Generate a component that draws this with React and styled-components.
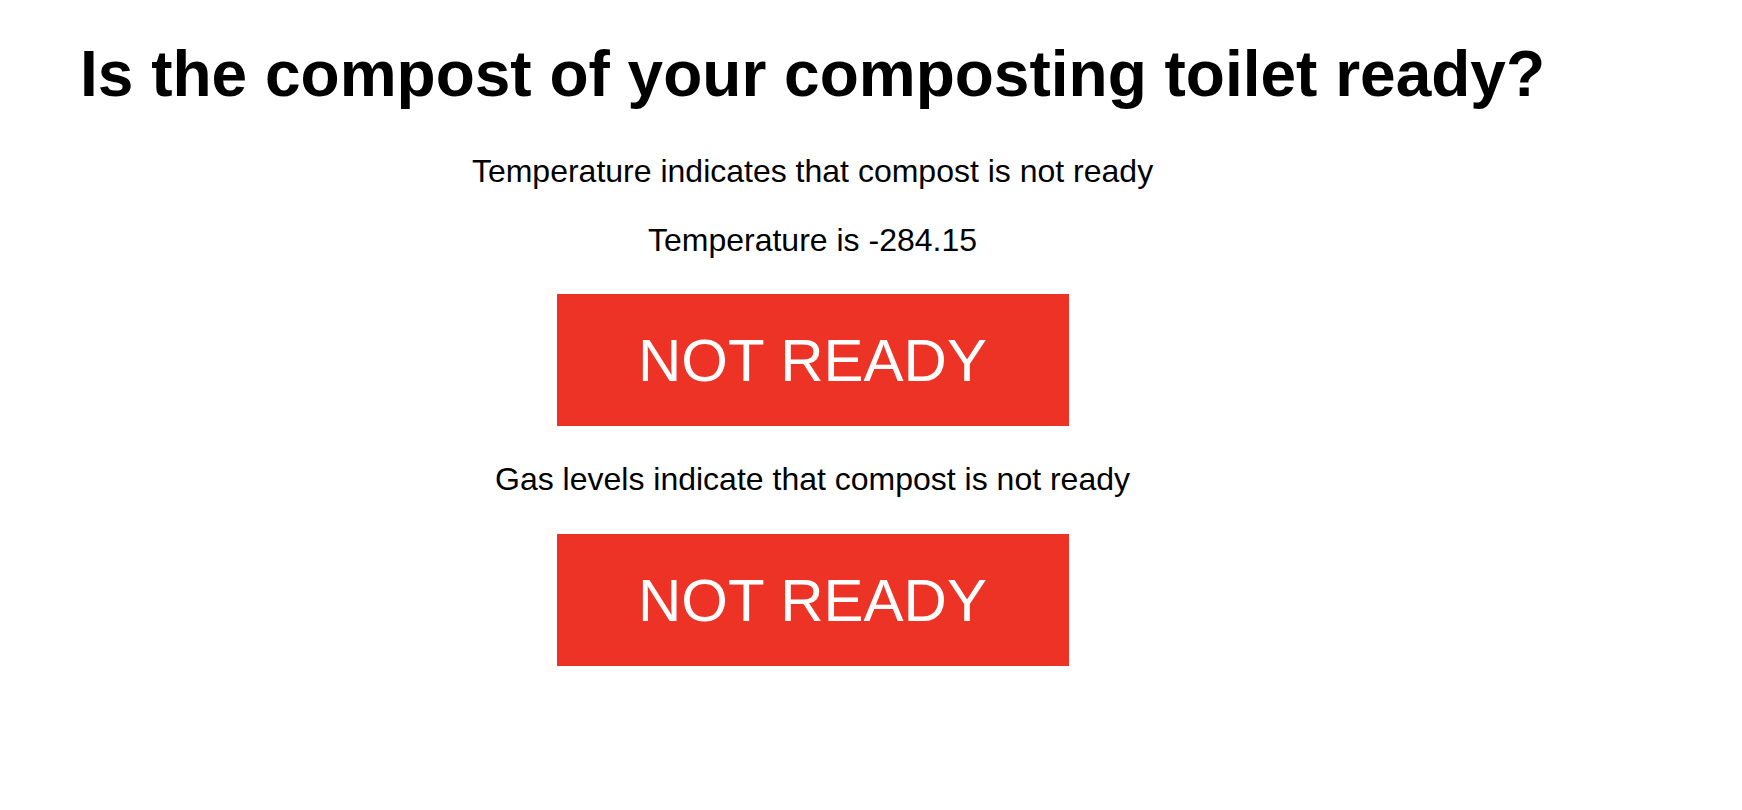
import styled, { createGlobalStyle } from 'styled-components';

const GlobalStyle = createGlobalStyle`
  html, body {
    margin: 0;
    padding: 0;
    background: #ffffff;
  }
  body {
    font-family: "Liberation Sans", Arial, Helvetica, sans-serif;
    color: #000;
  }
`;

const Page = styled.div`
  padding: 37px 0 0 80px;
`;

const Wrapper = styled.div`
  width: fit-content;
  display: flex;
  flex-direction: column;
  align-items: center;
`;

const Heading = styled.h1`
  margin: 0 0 42px;
  font-size: 64px;
  font-weight: 700;
  white-space: nowrap;
`;

const Section = styled.div`
  display: flex;
  flex-direction: column;
  align-items: center;
  gap: ${(props) => props.gap || '36px'};
`;

const Status = styled.p`
  margin: 0;
  font-size: 32px;
  text-align: center;
`;

const Badge = styled.div`
  width: 512px;
  height: 132px;
  display: flex;
  align-items: center;
  justify-content: center;
  background-color: ${(props) => (props.ready ? '#2fa84f' : '#ec3325')};
  color: #fff;
  font-size: 60px;
  box-sizing: border-box;
`;

const Stack = styled.div`
  display: flex;
  flex-direction: column;
  align-items: center;
  gap: 35px;
`;

const App = () => {
  const temperature = -284.15;

  return (
    <>
      <GlobalStyle />
      <Page>
        <Wrapper>
          <Heading>Is the compost of your composting toilet ready?</Heading>
          <Stack>
            <Section gap="32px">
              <Status>Temperature indicates that compost is not ready</Status>
              <Status>Temperature is {temperature}</Status>
            </Section>
            <Badge>NOT READY</Badge>
            <Section>
              <Status>Gas levels indicate that compost is not ready</Status>
              <Badge>NOT READY</Badge>
            </Section>
          </Stack>
        </Wrapper>
      </Page>
    </>
  );
};

export default App;
